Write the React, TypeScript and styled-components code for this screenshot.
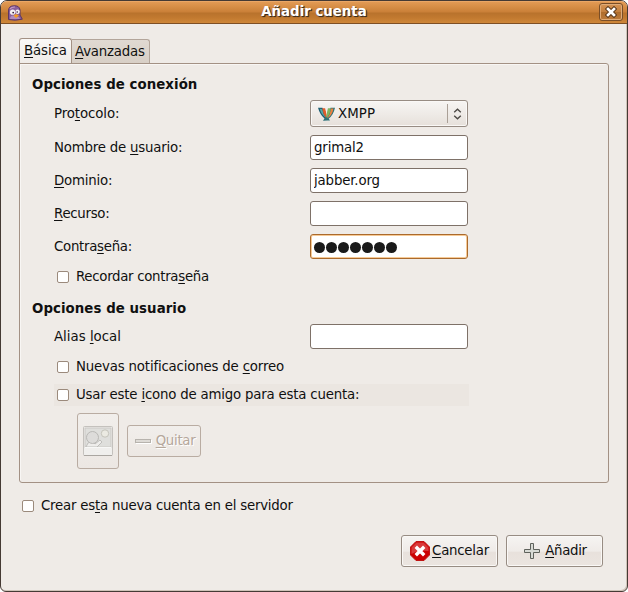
import React from 'react';
import styled, { createGlobalStyle, css } from 'styled-components';

const GlobalStyle = createGlobalStyle`
  *, *::before, *::after { box-sizing: border-box; }
  html, body { margin: 0; padding: 0; background: #fff; }
  body, button, input {
    font-family: "DejaVu Sans", sans-serif;
    font-size: 13.33px;
    color: #101010;
  }
`;

const Window = styled.div`
  width: 628px;
  height: 592px;
  border: 1px solid #453a34;
  border-radius: 7px 7px 6px 6px;
  background: #efebe7;
  box-shadow: inset -1px -1px 0 #cfc3b8;
  overflow: hidden;
  display: flex;
  flex-direction: column;
`;

const TitleBar = styled.header`
  flex: none;
  height: 23px;
  display: grid;
  grid-template-columns: 30px 1fr 30px;
  align-items: center;
  border-bottom: 1px solid #7e4f24;
  background: linear-gradient(#f3b477 0, #e29a54 1px, #d68d45 6px, #ca8038 11px, #b8722c 12px, #c27a30 17px, #cf8739 22px);
`;

const TitleIcon = styled.svg`
  margin: 2px 0 0 6px;
  width: 16px;
  height: 16px;
`;

const TitleText = styled.h1`
  margin: 0;
  text-align: center;
  font-size: 13.33px;
  line-height: 20px;
  letter-spacing: 0;
  color: #fff;
  text-shadow: 1px 1px 1px #3d2b1c, 1px 1px 0 #5a4330;
`;

const CloseButton = styled.button`
  justify-self: end;
  margin: 0 4px 0 0;
  padding: 0;
  width: 24px;
  height: 18px;
  display: flex;
  align-items: center;
  justify-content: center;
  border: 1px solid #7a4e27;
  border-radius: 3px;
  box-shadow: inset 0 0 0 1px #dfab78;
  background: linear-gradient(#d69454, #c4803f 48%, #ad6c2c 50%, #bd7b3b);
`;

const Content = styled.main`
  padding: 14px 18px 0;
  display: flex;
  flex-direction: column;
`;

const Tabs = styled.nav`
  display: flex;
  align-items: flex-end;
  height: 26px;
  margin-bottom: -1px;
`;

const Tab = styled.div<{ $active?: boolean; $ls?: number }>`
  height: 25px;
  line-height: 23px;
  padding-left: 3px;
  width: 78px;
  white-space: nowrap;
  letter-spacing: ${p => p.$ls ?? 0}px;
  border: 1px solid #b3a59a;
  border-left: 0;
  border-bottom-color: #a39184;
  border-radius: 0 3px 0 0;
  background: linear-gradient(#e0d9d2, #d8cfc6);
  ${p => p.$active && css`
    height: 26px;
    width: 53px;
    padding-left: 4px;
    border: 1px solid #a39184;
    border-bottom: 0;
    border-radius: 3px 3px 0 0;
    background: linear-gradient(#faf8f6, #efebe7);
  `}
`;

const Panel = styled.section`
  width: 590px;
  height: 420px;
  border: 1px solid #a39184;
  border-radius: 0 3px 3px 3px;
  box-shadow: inset 1px 1px 0 #f8f6f4;
  padding: 11px 0 0 12px;
`;

const SectionTitle = styled.h2<{ $top?: number }>`
  margin: ${p => p.$top ?? 0}px 0 0;
  height: 20px;
  line-height: 20px;
  font-size: 13.33px;
  letter-spacing: 0.06px;
`;

const FormGrid = styled.div`
  margin-top: 5px;
  padding-left: 22px;
  display: grid;
  grid-template-columns: 256px 158px;
  align-items: center;
  row-gap: 8px;
`;

const Text = styled.span<{ $ls?: number }>`
  white-space: nowrap;
  line-height: 20px;
  letter-spacing: ${p => p.$ls ?? -0.2}px;
`;

const Key = styled.u`
  text-decoration: underline;
  text-decoration-thickness: 1px;
  text-underline-offset: 2px;
  text-decoration-skip-ink: none;
`;

const Field = styled.input`
  width: 158px;
  height: 25px;
  padding: 0 3px 1px;
  border: 1px solid #7e7168;
  border-radius: 3px;
  background: #fff;
  outline: 0;
  letter-spacing: -0.15px;
`;

const PasswordBox = styled.div`
  width: 158px;
  height: 25px;
  padding: 2px 0 0 3px;
  display: flex;
  align-items: center;
  gap: 1px;
  border: 1px solid #ab6a2c;
  border-radius: 3px;
  background: #fff;
  box-shadow: inset 0 0 0 1px #f6ca96;
`;

const Dot = styled.i`
  width: 11px;
  height: 11px;
  border-radius: 50%;
  background: #1a1a1a;
`;

const Combo = styled.div`
  width: 158px;
  height: 27px;
  padding-left: 7px;
  display: flex;
  align-items: center;
  border: 1px solid #978c83;
  border-radius: 3px;
  box-shadow: inset 0 0 0 1px #faf8f6;
  background: linear-gradient(#f7f5f3, #eeeae6 55%, #e6e0da);
`;

const ComboText = styled(Text)`
  flex: 1;
  margin-left: 3px;
`;

const ComboArrows = styled.div`
  height: 19px;
  width: 20px;
  display: flex;
  align-items: center;
  justify-content: center;
  border-left: 1px solid #aaa097;
`;

const CheckRow = styled.label<{ $top: number; $left?: number; $shaded?: boolean }>`
  margin: ${p => p.$top}px 0 0 ${p => p.$left ?? 22}px;
  width: 415px;
  height: 22px;
  padding-left: 3px;
  display: flex;
  align-items: center;
  gap: 7px;
  background: ${p => (p.$shaded ? '#ebe6e1' : 'transparent')};
`;

const CheckBox = styled.input.attrs({ type: 'checkbox' })`
  appearance: none;
  flex: none;
  margin: 0;
  width: 12px;
  height: 12px;
  border: 1px solid #9b8a7c;
  border-radius: 2px;
  background: #fff;
`;

const CheckText = styled(Text)`
  margin-top: -1px;
`;

const IconRow = styled.div`
  margin: 7px 0 0 45px;
  display: flex;
  align-items: center;
  gap: 8px;
`;

const Button = styled.button<{ $w: number; $h?: number; $disabled?: boolean }>`
  width: ${p => p.$w}px;
  height: ${p => p.$h ?? 32}px;
  padding: 0;
  display: flex;
  align-items: center;
  justify-content: center;
  border: 1px solid #978c83;
  border-radius: 3px;
  box-shadow: inset 0 0 0 1px #faf8f6;
  background: linear-gradient(#f6f4f2, #efebe8 50%, #e8e1dc 55%, #ebe5e0);
  ${p => p.$disabled && css`
    color: #b5a79b;
    text-shadow: 1px 1px 0 #fff;
    border-color: #b9aca2;
    box-shadow: none;
    background: linear-gradient(#f1eeeb, #efebe7 50%, #ece7e3);
  `}
`;

const ButtonText = styled(Text)<{ $gap: number }>`
  margin: -1px 0 0 ${p => p.$gap}px;
`;

const WideButton = styled(Button)`
  padding-left: 2px;
`;

const Actions = styled.footer`
  margin-top: 18px;
  padding-right: 6px;
  display: flex;
  justify-content: flex-end;
  gap: 8px;
`;

const PidginIcon = () => (
  <TitleIcon viewBox="0 0 16 16">
    <path d="M1.5 14.5V6Q1.5 1 6.5 0.8Q12.5 0.3 13 5V10L15.3 14.2Q8 16 1.5 14.5Z" fill="#8a5f9b" stroke="#5c3565" strokeWidth="1" />
    <path d="M3 4Q4.5 1.8 8 2" fill="none" stroke="#c59bc4" strokeWidth="1.2" />
    <path d="M3 14Q3 10.5 6 10.5L12 12L13 14Z" fill="#b18dbd" />
    <circle cx="5.6" cy="7.2" r="2.6" fill="#f5f0f4" />
    <circle cx="10.6" cy="6.8" r="2.2" fill="#f5f0f4" />
    <circle cx="6.2" cy="7.6" r="0.9" fill="#35213c" />
    <circle cx="10.2" cy="7" r="0.8" fill="#35213c" />
    <path d="M6.5 10.4L9 9L12 10.5L9 13Z" fill="#f59a22" />
  </TitleIcon>
);

const CloseIcon = () => (
  <svg width="12" height="12" viewBox="0 0 12 12">
    <path d="M3 3L9 9M9 3L3 9" stroke="#5d3b1d" strokeWidth="4.6" strokeLinecap="square" />
    <path d="M3 3L9 9M9 3L3 9" stroke="#fff" strokeWidth="2.6" strokeLinecap="square" />
  </svg>
);

const XmppIcon = () => (
  <svg width="17" height="14" viewBox="0 0 17 14">
    <path d="M0 0.8H4.5L8.5 9.8L11.5 12.8L5 13.6Q7 12.5 6.5 11.5Q2 8 0 0.8Z" fill="#1d5f73" />
    <path d="M1.8 1.8L4.2 2.2Q5 7.5 8 10.8Q3.6 8.3 1.8 1.8Z" fill="#5aa9a5" />
    <path d="M4.2 1.2H7.2L8.8 8.8L8 11Q5 7 4.2 1.2Z" fill="#df5c2c" />
    <path d="M17 0.8H12.5L8.5 9.8L5 13.4L12 13.6L10.6 11.8Q15.5 8 17 0.8Z" fill="#2b7378" />
    <path d="M15.5 1.4H12.8Q12.5 7.5 8.8 11.4Q14 9 15.5 1.4Z" fill="#ee8040" />
    <path d="M12.8 1.2H9.8L8.3 9L8.8 11Q12.3 7 12.8 1.2Z" fill="#82b45f" />
    <path d="M7.5 1H9.5L8.5 7Z" fill="#f0eeea" />
  </svg>
);

const ArrowsIcon = () => (
  <svg width="9" height="12" viewBox="0 0 9 12">
    <path d="M1.2 4.3L4.5 1.2L7.8 4.3M1.2 7.7L4.5 10.8L7.8 7.7" fill="none" stroke="#4b4743" strokeWidth="1.3" />
  </svg>
);

const PhotoIcon = () => (
  <svg width="30" height="30" viewBox="0 0 30 30">
    <rect x="0.5" y="0.5" width="29" height="29" rx="1" fill="#f0efed" stroke="#c4c1bd" />
    <path d="M1 29.5H29" stroke="#aaa6a1" />
    <rect x="2" y="2" width="26" height="19" fill="#dfdfdc" stroke="#cbc9c5" />
    <path d="M3 21Q4 16 9 15L12 18L17 14L19 16L14 21Z" fill="#eeedeb" stroke="#bfbebb" />
    <circle cx="9.5" cy="11.5" r="6" fill="#dddcda" stroke="#b9b8b5" />
    <circle cx="22" cy="7.5" r="3.7" fill="#ebeae2" stroke="#c5c4bb" />
    <path d="M2 21.5H28" stroke="#f8f8f7" />
  </svg>
);

const MinusIcon = () => (
  <svg width="17" height="6" viewBox="0 0 17 6">
    <path d="M1 5.5H16.5V2" fill="none" stroke="#fff" />
    <rect x="0.5" y="1.5" width="15" height="3" fill="#dedbd6" stroke="#b7b3ad" />
  </svg>
);

const CancelIcon = () => (
  <svg width="20" height="20" viewBox="0 0 20 20">
    <path d="M6 0.5H14L19.5 6V14L14 19.5H6L0.5 14V6Z" fill="#cc0000" stroke="#c01414" />
    <path d="M6.4 1.5H13.6L18.5 6.4V10Q9 9 1.5 13V6.4Z" fill="#d93a3a" />
    <path d="M7 7L13 13M13 7L7 13" stroke="#fff" strokeWidth="3.4" strokeLinecap="square" />
  </svg>
);

const PlusIcon = () => (
  <svg width="16" height="16" viewBox="0 0 16 16">
    <path d="M6.5 0.5H9.5V6.5H15.5V9.5H9.5V15.5H6.5V9.5H0.5V6.5H6.5Z" fill="#d8dad5" stroke="#5f625c" />
  </svg>
);

export default function App() {
  return (
    <>
      <GlobalStyle />
      <Window>
        <TitleBar>
          <PidginIcon />
          <TitleText>Añadir cuenta</TitleText>
          <CloseButton aria-label="Cerrar"><CloseIcon /></CloseButton>
        </TitleBar>
        <Content>
          <Tabs>
            <Tab $active $ls={-0.1}><Key>B</Key>ásica</Tab>
            <Tab $ls={-0.2}><Key>A</Key>vanzadas</Tab>
          </Tabs>
          <Panel>
            <SectionTitle>Opciones de conexión</SectionTitle>
            <FormGrid>
              <Text $ls={-0.1}>Pro<Key>t</Key>ocolo:</Text>
              <Combo>
                <XmppIcon />
                <ComboText $ls={0.1}>XMPP</ComboText>
                <ComboArrows><ArrowsIcon /></ComboArrows>
              </Combo>
              <Text>Nombre de <Key>u</Key>suario:</Text>
              <Field defaultValue="grimal2" />
              <Text><Key>D</Key>ominio:</Text>
              <Field defaultValue="jabber.org" />
              <Text $ls={-0.3}><Key>R</Key>ecurso:</Text>
              <Field />
              <Text $ls={-0.28}>Contra<Key>s</Key>eña:</Text>
              <PasswordBox>
                {Array.from({ length: 7 }, (_, i) => <Dot key={i} />)}
              </PasswordBox>
            </FormGrid>
            <CheckRow $top={7}>
              <CheckBox />
              <CheckText $ls={-0.3}>Recordar contra<Key>s</Key>eña</CheckText>
            </CheckRow>
            <SectionTitle $top={11}>Opciones de usuario</SectionTitle>
            <FormGrid>
              <Text $ls={0}>Alias <Key>l</Key>ocal</Text>
              <Field />
            </FormGrid>
            <CheckRow $top={7}>
              <CheckBox />
              <CheckText $ls={-0.18}>Nuevas notificaciones de <Key>c</Key>orreo</CheckText>
            </CheckRow>
            <CheckRow $top={6} $shaded>
              <CheckBox />
              <CheckText>Usar este <Key>i</Key>cono de amigo para esta cuenta:</CheckText>
            </CheckRow>
            <IconRow>
              <Button $w={42} $h={56} $disabled aria-label="Icono"><PhotoIcon /></Button>
              <WideButton $w={74} $disabled>
                <MinusIcon />
                <ButtonText $gap={4} $ls={-0.3}><Key>Q</Key>uitar</ButtonText>
              </WideButton>
            </IconRow>
          </Panel>
          <CheckRow $top={12} $left={0}>
            <CheckBox />
            <CheckText $ls={-0.22}>Crear es<Key>t</Key>a nueva cuenta en el servidor</CheckText>
          </CheckRow>
          <Actions>
            <Button $w={97}>
              <CancelIcon />
              <ButtonText $gap={2} $ls={-0.25}><Key>C</Key>ancelar</ButtonText>
            </Button>
            <WideButton $w={97}>
              <PlusIcon />
              <ButtonText $gap={5} $ls={-0.3}><Key>A</Key>ñadir</ButtonText>
            </WideButton>
          </Actions>
        </Content>
      </Window>
    </>
  );
}
